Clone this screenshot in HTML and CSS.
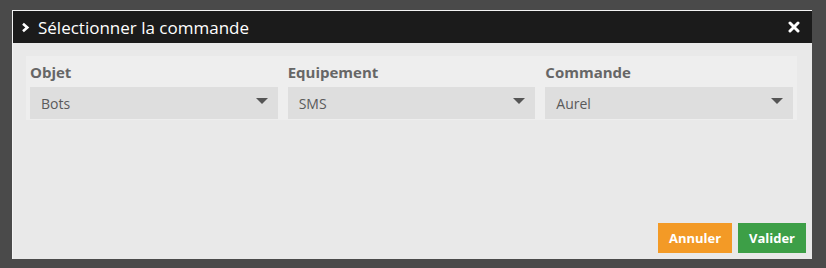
FILE: index.html
```html
<!DOCTYPE html>
<html lang="fr">
<head>
<meta charset="utf-8">
<title>Sélectionner la commande</title>
<link rel="stylesheet" href="styles.css">
</head>
<body>
<div class="dialog">
  <div class="titlebar">
    <span class="chev"><svg width="9" height="11" viewBox="0 0 9 11"><path d="M2 1.8 L6.3 5.5 L2 9.2" fill="none" stroke="#fff" stroke-width="2.6"/></svg></span>
    <span class="title">Sélectionner la commande</span>
    <span class="close"><svg width="12" height="12" viewBox="0 0 12 12"><path d="M2 2 L10 10 M10 2 L2 10" stroke="#fff" stroke-width="3" stroke-linecap="round"/></svg></span>
  </div>
  <div class="content">
    <div class="panel">
      <div class="field">
        <div class="label">Objet</div>
        <div class="select"><span>Bots</span><i class="caret"></i></div>
      </div>
      <div class="field">
        <div class="label">Equipement</div>
        <div class="select"><span>SMS</span><i class="caret"></i></div>
      </div>
      <div class="field">
        <div class="label">Commande</div>
        <div class="select"><span>Aurel</span><i class="caret"></i></div>
      </div>
    </div>
    <div class="actions">
      <button class="btn cancel">Annuler</button>
      <button class="btn ok">Valider</button>
    </div>
  </div>
</div>
</body>
</html>
```
FILE: styles.css
```css
html, body { margin: 0; padding: 0; }
body {
  background: #4a4a4a;
  width: 826px;
  height: 268px;
  padding: 10px 0 0 12px;
  box-sizing: border-box;
  font-family: "Open Sans", "DejaVu Sans", sans-serif;
}
.dialog {
  width: 800px;
  height: 249px;
  background: #e9e9e9;
  border-top: 1px solid #f4f4f4;
  border-left: 1px solid #f4f4f4;
  box-sizing: border-box;
  display: flex;
  flex-direction: column;
}
.titlebar {
  height: 32px;
  background: #1b1b1b;
  color: #fff;
  display: flex;
  align-items: center;
  padding: 0 12px 0 8px;
  flex: none;
}
.chev { display: flex; width: 11px; margin-right: 6px; }
.title { font-size: 17px; flex: 1; }
.close { display: flex; }
.content {
  flex: 1;
  display: flex;
  flex-direction: column;
  padding: 13px 6px 6px 13px;
}
.panel {
  background: #eeeeee;
  display: flex;
  gap: 10px;
  padding: 4px 4px 1px 4px;
  width: 763px;
}
.field { flex: 1; display: flex; flex-direction: column; }
.label {
  font-weight: 700;
  font-size: 15px;
  color: #666;
  height: 27px;
  line-height: 24px;
}
.select {
  height: 32px;
  background: #dedede;
  display: flex;
  align-items: center;
  padding: 0 10px 0 11px;
  font-size: 14px;
  color: #5a5a5a;
  justify-content: space-between;
}
.caret {
  width: 0; height: 0;
  border-left: 6px solid transparent;
  border-right: 6px solid transparent;
  border-top: 6px solid #555;
  margin-top: -4px;
}
.actions {
  margin-top: auto;
  display: flex;
  justify-content: flex-end;
  gap: 6px;
}
.btn {
  border: none;
  color: #fff;
  font-family: "Open Sans", "DejaVu Sans", sans-serif;
  font-size: 13px;
  font-weight: 700;
  height: 30px;
  padding: 0;
}
.cancel { background: #f39a26; width: 74px; }
.ok { background: #3d9f47; width: 68px; }
```
